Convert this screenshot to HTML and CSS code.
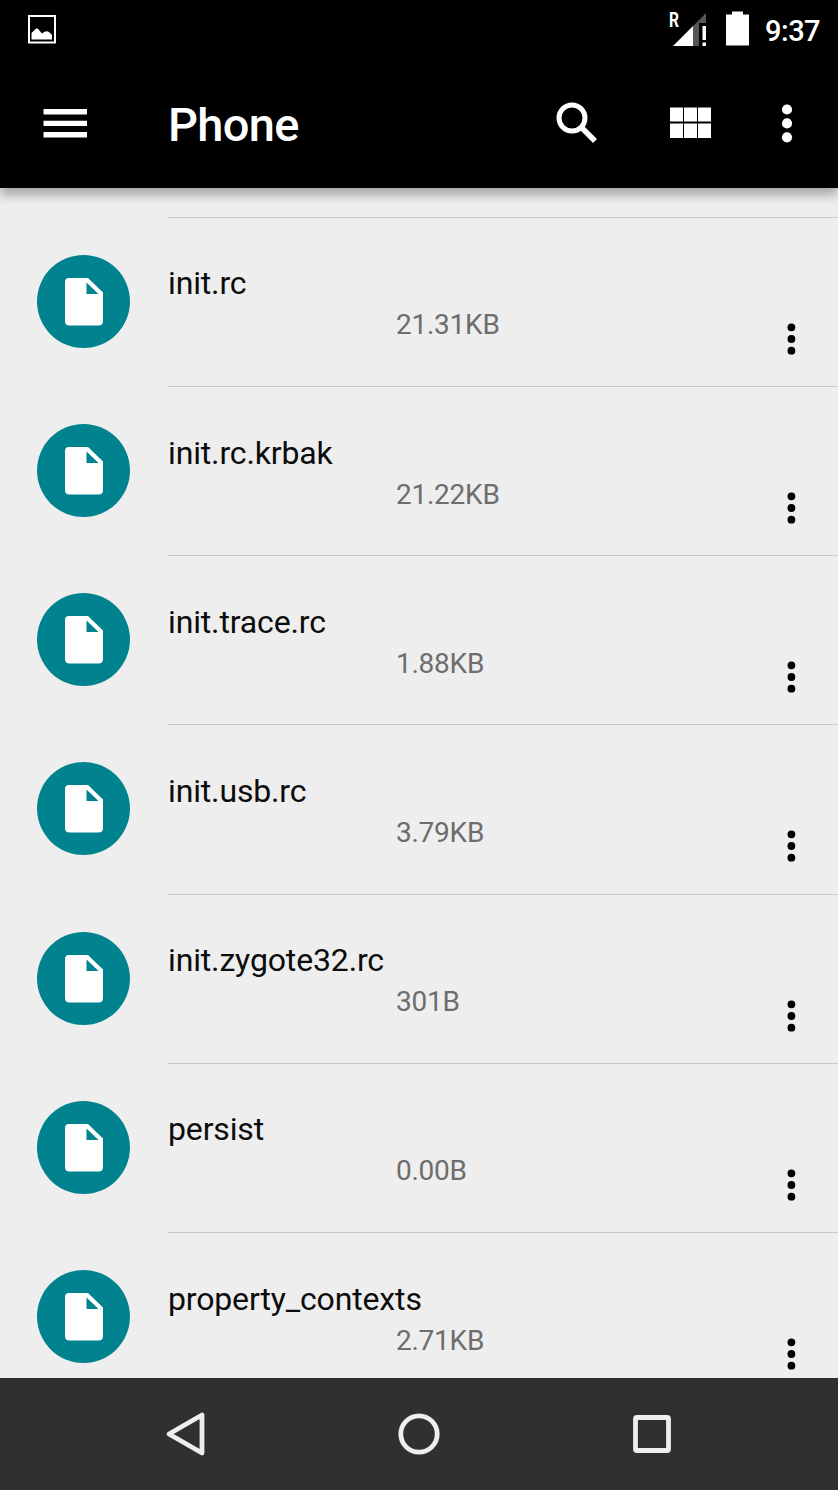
FILE: index.html
```html
<!DOCTYPE html>
<html lang="en">
<head>
    <meta charset="UTF-8">
    <meta name="viewport" content="width=device-width, initial-scale=1.0">
    <title>Phone</title>
    <link rel="stylesheet" href="styles.css">
</head>
<body>
    <!-- Shared icons -->
    <svg class="defs" width="0" height="0">
        <symbol id="file" viewBox="0 0 93 93">
            <path fill="#fff" fill-rule="evenodd" d="M32 23H51L66 37.500V66Q66 70.500 61.500 70.500H32.500Q28 70.500 28 66V27Q28 23 32 23ZM49.500 27.500V39H61.500Z"/>
        </symbol>
        <symbol id="dots" viewBox="0 0 10 34">
            <circle cx="5.400" cy="5.300" r="3.900"/>
            <circle cx="5.400" cy="17" r="3.900"/>
            <circle cx="5.400" cy="28.700" r="3.900"/>
        </symbol>
    </svg>

    <div class="screen">
        <header class="header">
            <div class="status-bar">
                <svg class="picture" width="28" height="29" viewBox="0 0 28 29">
                    <rect x="1" y="1" width="26" height="26.500" fill="none" stroke="#fff" stroke-width="2"/>
                    <path fill="#fff" d="M3.500 24.500V18L7 14.500Q9 12.500 11 15L14 18.500Q18 15 21 17L24 20V24.500Z"/>
                </svg>
                <div class="signal">
                    <span class="roaming">R</span>
                    <svg width="38" height="36" viewBox="0 0 38 36">
                        <path fill="#fff" d="M4 34L24 14V34Z"/>
                        <path fill="#555" d="M24 14L37 1V11H30V34H24Z"/>
                        <path fill="#fff" d="M33.500 14H37V28H33.500ZM33.500 30.500H37V34H33.500Z"/>
                    </svg>
                </div>
                <svg class="battery" width="23" height="35" viewBox="0 0 23 35">
                    <path fill="#fff" d="M6 .5H17V3.500H23V34.500H0V3.500H6Z"/>
                </svg>
                <span class="clock">9:37</span>
            </div>
            <div class="toolbar">
                <svg class="menu" width="44" height="30" viewBox="0 0 44 30">
                    <path fill="#fff" d="M.5 1H44V6.500H.5ZM.5 12.700H44V18H.5ZM.5 24H44V29.500H.5Z"/>
                </svg>
                <h1 class="title">Phone</h1>
                <svg class="search" width="42" height="42" viewBox="0 0 42 42" fill="none" stroke="#fff">
                    <circle cx="16" cy="16" r="13" stroke-width="5"/>
                    <path d="M26 26L39 39" stroke-width="5.500"/>
                </svg>
                <svg class="grid" width="42" height="32" viewBox="0 0 42 32">
                    <path fill="#fff" d="M0 .5H13V14.500H0ZM14 .5H27V14.500H14ZM28 .5H41V14.500H28ZM0 16.500H13V31H0ZM14 16.500H27V31H14ZM28 16.500H41V31H28Z"/>
                </svg>
                <svg class="overflow" width="12" height="40" viewBox="0 0 12 40" fill="#fff">
                    <circle cx="6" cy="6.500" r="5.100"/>
                    <circle cx="6" cy="20.400" r="5.100"/>
                    <circle cx="6" cy="34.300" r="5.100"/>
                </svg>
            </div>
        </header>

        <main class="file-list">
            <div class="file">
                <svg class="file-icon"><use href="#file"/></svg>
                <div class="file-body">
                    <div class="file-info"><div class="name">init.rc</div><div class="size">21.31KB</div></div>
                    <svg class="more"><use href="#dots"/></svg>
                </div>
            </div>
            <div class="file">
                <svg class="file-icon"><use href="#file"/></svg>
                <div class="file-body">
                    <div class="file-info"><div class="name">init.rc.krbak</div><div class="size">21.22KB</div></div>
                    <svg class="more"><use href="#dots"/></svg>
                </div>
            </div>
            <div class="file">
                <svg class="file-icon"><use href="#file"/></svg>
                <div class="file-body">
                    <div class="file-info"><div class="name">init.trace.rc</div><div class="size">1.88KB</div></div>
                    <svg class="more"><use href="#dots"/></svg>
                </div>
            </div>
            <div class="file">
                <svg class="file-icon"><use href="#file"/></svg>
                <div class="file-body">
                    <div class="file-info"><div class="name">init.usb.rc</div><div class="size">3.79KB</div></div>
                    <svg class="more"><use href="#dots"/></svg>
                </div>
            </div>
            <div class="file">
                <svg class="file-icon"><use href="#file"/></svg>
                <div class="file-body">
                    <div class="file-info"><div class="name">init.zygote32.rc</div><div class="size">301B</div></div>
                    <svg class="more"><use href="#dots"/></svg>
                </div>
            </div>
            <div class="file">
                <svg class="file-icon"><use href="#file"/></svg>
                <div class="file-body">
                    <div class="file-info"><div class="name">persist</div><div class="size">0.00B</div></div>
                    <svg class="more"><use href="#dots"/></svg>
                </div>
            </div>
            <div class="file">
                <svg class="file-icon"><use href="#file"/></svg>
                <div class="file-body">
                    <div class="file-info"><div class="name">property_contexts</div><div class="size">2.71KB</div></div>
                    <svg class="more"><use href="#dots"/></svg>
                </div>
            </div>
        </main>

        <nav class="nav-bar">
            <svg width="44" height="46" viewBox="0 0 44 46">
                <path d="M38 4V42L5 23Z"/>
            </svg>
            <svg width="44" height="46" viewBox="0 0 44 46">
                <circle cx="22" cy="23" r="18.200"/>
            </svg>
            <svg width="44" height="46" viewBox="0 0 44 46">
                <rect x="5.500" y="6.500" width="33" height="33" rx="1.500"/>
            </svg>
        </nav>
    </div>
</body>
</html>
```
FILE: styles.css
```css
body {
    margin: 0;
    background: #eee;
    font-family: Roboto, "Noto Sans", sans-serif;
}
.defs {
    position: absolute;
}
.screen {
    display: flex;
    flex-direction: column;
    height: 1490px;
    overflow: hidden;
}
svg {
    display: block;
    flex: none;
}

/* Header */
.header {
    flex: none;
    height: 188px;
    background: #000;
    color: #fff;
    box-shadow: 0 7px 10px rgba(0, 0, 0, 0.3);
    z-index: 1;
}
.status-bar {
    display: flex;
    align-items: flex-start;
    height: 60px;
    padding: 0 18px 0 28px;
}
.picture {
    margin-top: 15px;
}
.signal {
    position: relative;
    margin: 12px 19px 0 auto;
}
.roaming {
    position: absolute; /* Sits over the signal triangle */
    left: 0;
    top: 0;
    font-size: 19.500px;
    line-height: 18px;
    font-weight: 700;
    transform: scaleX(0.8);
    transform-origin: left;
}
.battery {
    margin-top: 11px;
}
.clock {
    width: 55px;
    margin-left: 16px;
    padding-top: 13px;
    font-size: 29px;
    line-height: 36px;
    font-weight: 500;
    letter-spacing: -0.5px;
}
.toolbar {
    display: flex;
    align-items: center;
    height: 128px;
    box-sizing: border-box;
    padding: 0 45px 3px 43px;
}
.title {
    flex: 1;
    margin: 5px 0 0 81px;
    font-size: 47px;
    line-height: 56px;
    font-weight: 500;
    letter-spacing: -0.7px;
}
.grid {
    margin: 0 69px 0 72px;
}

/* File list */
.file-list {
    flex: 1;
    min-height: 0;
    overflow: hidden;
    padding-top: 28.900px;
}
.file {
    display: flex;
    height: 169.200px;
}
.file-icon {
    width: 93px;
    height: 93px;
    margin: 38px 38px 0 37px;
    border-radius: 50%;
    background: #00838f;
}
.file-body {
    flex: 1;
    display: flex;
    justify-content: space-between;
    border-top: 1px solid #c8c8c8;
}
.file-info {
    padding-top: 44.500px;
}
.name {
    font-size: 32px;
    line-height: 42px;
    letter-spacing: -0.15px;
    color: #0c0c0c;
}
.size {
    margin-left: 228px;
    padding-top: 2px;
    font-size: 28px;
    line-height: 38px;
    letter-spacing: -0.25px;
    color: #6d6d6d;
}
.more {
    width: 10px;
    height: 34px;
    margin: 104px 42px 0 0;
}

/* Navigation bar */
.nav-bar {
    flex: none;
    display: flex;
    justify-content: center;
    align-items: center;
    gap: 189px;
    height: 112px;
    background: #303030;
    fill: none;
    stroke: #eee;
    stroke-width: 4.800px;
    stroke-linejoin: round;
}
```
